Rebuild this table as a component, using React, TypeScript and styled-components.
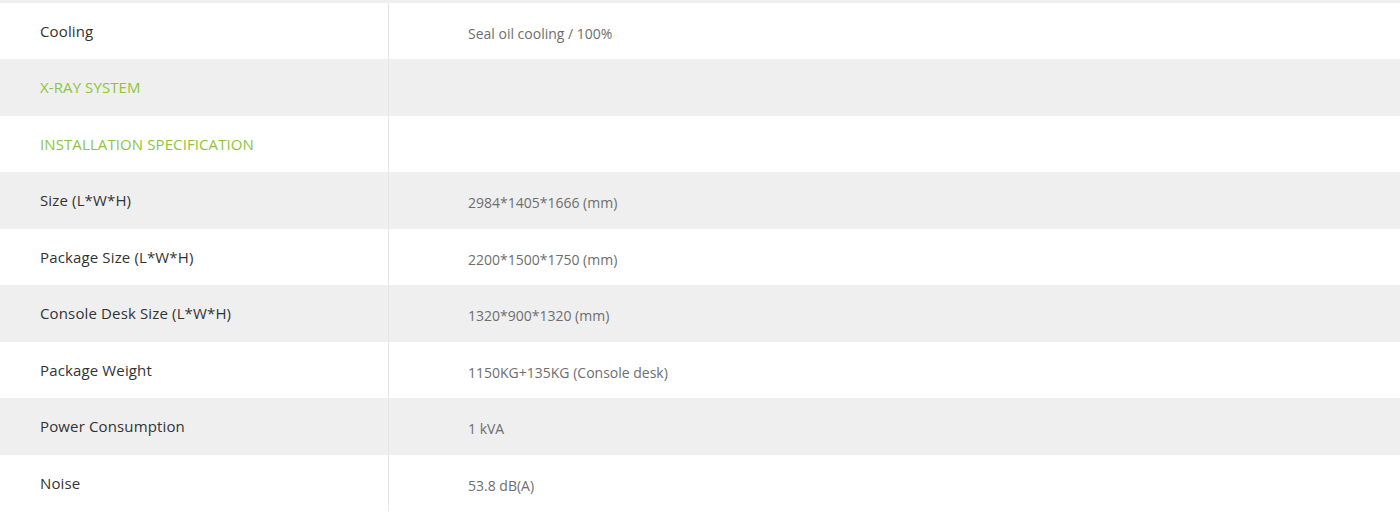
import React from "react";
import styled, { createGlobalStyle } from "styled-components";

const Global = createGlobalStyle`
  html, body { margin: 0; padding: 0; background: #ffffff; }
  body { font-family: "Open Sans", "Liberation Sans", sans-serif; }
`;

const Table = styled.div`
  width: 1400px;
  display: flex;
  flex-direction: column;
`;

const TopStrip = styled.div`
  height: 2.5px;
  background: #efefef;
`;

const Row = styled.div<{ $shade: boolean }>`
  display: grid;
  grid-template-columns: 389px 1fr;
  height: 56.5px;
  background: ${(p) => (p.$shade ? "#efefef" : "#ffffff")};
`;

const Label = styled.div<{ $heading: boolean }>`
  display: flex;
  align-items: center;
  padding-left: 40px;
  border-right: 1px solid #e6e6e6;
  font-size: 15px;
  letter-spacing: ${(p) => (p.$heading ? "0.1px" : "0.14px")};
  color: ${(p) => (p.$heading ? "#8cc540" : "#333333")};
`;

const Value = styled.div`
  display: flex;
  align-items: center;
  padding-left: 79px;
  padding-top: 5px;
  font-size: 14px;
  color: #6e6e6e;
`;

type Spec = { label: string; value?: string; heading?: boolean };

const specs: Spec[] = [
  { label: "Cooling", value: "Seal oil cooling / 100%" },
  { label: "X-RAY SYSTEM", heading: true },
  { label: "INSTALLATION SPECIFICATION", heading: true },
  { label: "Size (L*W*H)", value: "2984*1405*1666 (mm)" },
  { label: "Package Size (L*W*H)", value: "2200*1500*1750 (mm)" },
  { label: "Console Desk Size (L*W*H)", value: "1320*900*1320 (mm)" },
  { label: "Package Weight", value: "1150KG+135KG (Console desk)" },
  { label: "Power Consumption", value: "1 kVA" },
  { label: "Noise", value: "53.8 dB(A)" },
];

export default function App() {
  return (
    <>
      <Global />
      <Table>
        <TopStrip />
        {specs.map((s, i) => (
          <Row key={s.label} $shade={i % 2 === 1}>
            <Label $heading={!!s.heading}>{s.label}</Label>
            <Value>{s.value ?? ""}</Value>
          </Row>
        ))}
      </Table>
    </>
  );
}
